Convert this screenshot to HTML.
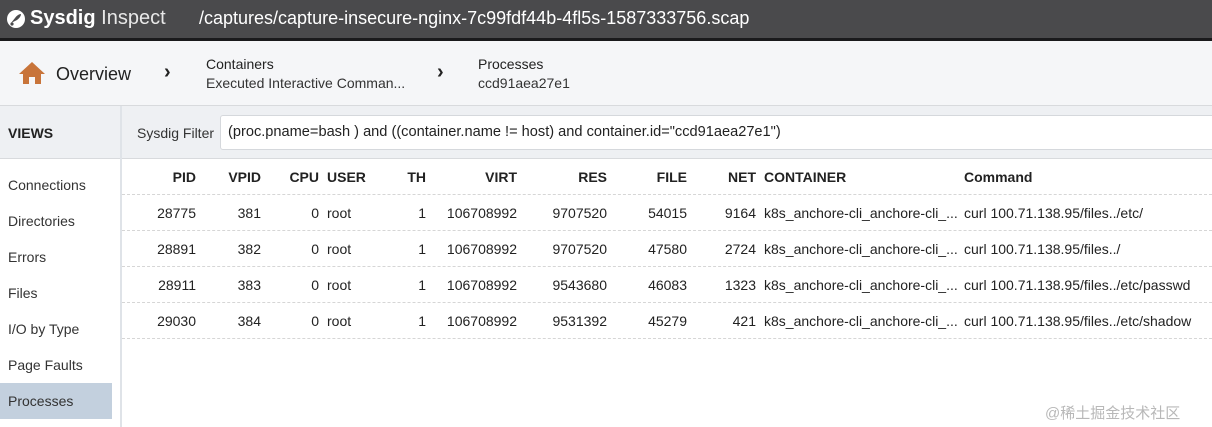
<!DOCTYPE html>
<html><head><meta charset="utf-8"><style>
*{margin:0;padding:0;box-sizing:border-box}
body{width:1212px;height:427px;overflow:hidden;background:#fff;font-family:"Liberation Sans","Noto Sans CJK SC",sans-serif;color:#222;position:relative;font-size:14px}
.a{position:absolute;white-space:nowrap}
.top{position:absolute;left:0;top:0;width:1212px;background:#4a4a4c;border-bottom:3px solid #1a1a1c;height:41px}
.bc{position:absolute;left:0;top:41px;width:1212px;height:65px;background:#f5f6f8;border-bottom:1px solid #d8dadd}
.vh{position:absolute;left:0;top:106px;width:1212px;height:53px;background:#eef0f3;border-bottom:1px solid #d8dadd}
.side{position:absolute;left:120px;top:106px;width:2px;height:321px;background:#dfe3e8}
.filt{position:absolute;left:220px;top:115px;width:1000px;height:35px;background:#fff;border:1px solid #d5d8dc;border-radius:3px}
.r{text-align:right}
.hd{font-weight:bold}
.line{position:absolute;left:122px;width:1090px;border-top:1px dashed #d6d6d6}
.ch{font-size:20px;font-weight:normal;transform:scaleX(0.8)}
</style></head><body>
<div class="top"></div>
<svg class="a" style="left:6px;top:9px" width="20" height="20" viewBox="0 0 20 20"><circle cx="10" cy="10" r="9" fill="#fff"/><path d="M5 14 L9 9 Q12 5 15 5 Q15 8 11 11 Z" fill="#4a4a4c"/><circle cx="6" cy="15" r="1.6" fill="#4a4a4c"/></svg>
<div class="a" style="left:30px;top:7px;font-size:20px;color:#fff;font-weight:bold">Sysdig <span style="font-weight:normal;color:#e8e8e8">Inspect</span></div>
<div class="a" style="left:199px;top:8px;font-size:18px;color:#fff">/captures/capture-insecure-nginx-7c99fdf44b-4fl5s-1587333756.scap</div>
<div class="bc"></div>
<svg class="a" style="left:18px;top:61px" width="28" height="24" viewBox="0 0 28 24"><path d="M14 1 L27 13 L23 13 L23 23 L17 23 L17 16 L11 16 L11 23 L5 23 L5 13 L1 13 Z" fill="#c8743a"/></svg>
<div class="a" style="left:56px;top:64px;font-size:18px;color:#222">Overview</div>
<div class="a" style="left:164px;top:61px;font-size:20px;font-weight:bold">›</div>
<div class="a" style="left:206px;top:56px;font-size:14px">Containers</div>
<div class="a" style="left:206px;top:75px;font-size:14px;color:#333">Executed Interactive Comman...</div>
<div class="a" style="left:437px;top:61px;font-size:20px;font-weight:bold">›</div>
<div class="a" style="left:478px;top:56px;font-size:14px">Processes</div>
<div class="a" style="left:478px;top:75px;font-size:14px;color:#333">ccd91aea27e1</div>
<div class="vh"></div>
<div class="a" style="left:8px;top:125px;font-weight:bold;font-size:14px">VIEWS</div>
<div class="a" style="left:137px;top:125px;color:#333">Sysdig Filter</div>
<div class="filt"></div>
<div class="a" style="left:228px;top:124px;font-size:14.6px">(proc.pname=bash ) and ((container.name != host) and container.id="ccd91aea27e1")</div>
<div class="side"></div>
<div class="a" style="left:8px;top:177px;color:#333">Connections</div>
<div class="a" style="left:8px;top:213px;color:#333">Directories</div>
<div class="a" style="left:8px;top:249px;color:#333">Errors</div>
<div class="a" style="left:8px;top:285px;color:#333">Files</div>
<div class="a" style="left:8px;top:321px;color:#333">I/O by Type</div>
<div class="a" style="left:8px;top:357px;color:#333">Page Faults</div>
<div class="a" style="left:0;top:383px;width:112px;height:36px;background:#c3d0de"></div>
<div class="a" style="left:8px;top:393px;color:#333">Processes</div>

<div class="a hd r" style="left:136px;width:60px;top:169px">PID</div>
<div class="a hd r" style="left:200px;width:61px;top:169px">VPID</div>
<div class="a hd r" style="left:270px;width:49px;top:169px">CPU</div>
<div class="a hd" style="left:327px;top:169px">USER</div>
<div class="a hd r" style="left:380px;width:46px;top:169px">TH</div>
<div class="a hd r" style="left:440px;width:77px;top:169px">VIRT</div>
<div class="a hd r" style="left:530px;width:77px;top:169px">RES</div>
<div class="a hd r" style="left:620px;width:67px;top:169px">FILE</div>
<div class="a hd r" style="left:700px;width:56px;top:169px">NET</div>
<div class="a hd" style="left:764px;top:169px">CONTAINER</div>
<div class="a hd" style="left:964px;top:169px">Command</div>
<div class="line" style="top:194px"></div>

<div class="a r" style="left:136px;width:60px;top:205px">28775</div><div class="a r" style="left:200px;width:61px;top:205px">381</div><div class="a r" style="left:270px;width:49px;top:205px">0</div><div class="a" style="left:327px;top:205px">root</div><div class="a r" style="left:380px;width:46px;top:205px">1</div><div class="a r" style="left:440px;width:77px;top:205px">106708992</div><div class="a r" style="left:530px;width:77px;top:205px">9707520</div><div class="a r" style="left:620px;width:67px;top:205px">54015</div><div class="a r" style="left:700px;width:56px;top:205px">9164</div><div class="a" style="left:764px;top:205px">k8s_anchore-cli_anchore-cli_...</div><div class="a" style="left:964px;top:205px">curl 100.71.138.95/files../etc/</div>
<div class="line" style="top:230px"></div>
<div class="a r" style="left:136px;width:60px;top:241px">28891</div><div class="a r" style="left:200px;width:61px;top:241px">382</div><div class="a r" style="left:270px;width:49px;top:241px">0</div><div class="a" style="left:327px;top:241px">root</div><div class="a r" style="left:380px;width:46px;top:241px">1</div><div class="a r" style="left:440px;width:77px;top:241px">106708992</div><div class="a r" style="left:530px;width:77px;top:241px">9707520</div><div class="a r" style="left:620px;width:67px;top:241px">47580</div><div class="a r" style="left:700px;width:56px;top:241px">2724</div><div class="a" style="left:764px;top:241px">k8s_anchore-cli_anchore-cli_...</div><div class="a" style="left:964px;top:241px">curl 100.71.138.95/files../</div>
<div class="line" style="top:266px"></div>
<div class="a r" style="left:136px;width:60px;top:277px">28911</div><div class="a r" style="left:200px;width:61px;top:277px">383</div><div class="a r" style="left:270px;width:49px;top:277px">0</div><div class="a" style="left:327px;top:277px">root</div><div class="a r" style="left:380px;width:46px;top:277px">1</div><div class="a r" style="left:440px;width:77px;top:277px">106708992</div><div class="a r" style="left:530px;width:77px;top:277px">9543680</div><div class="a r" style="left:620px;width:67px;top:277px">46083</div><div class="a r" style="left:700px;width:56px;top:277px">1323</div><div class="a" style="left:764px;top:277px">k8s_anchore-cli_anchore-cli_...</div><div class="a" style="left:964px;top:277px">curl 100.71.138.95/files../etc/passwd</div>
<div class="line" style="top:302px"></div>
<div class="a r" style="left:136px;width:60px;top:313px">29030</div><div class="a r" style="left:200px;width:61px;top:313px">384</div><div class="a r" style="left:270px;width:49px;top:313px">0</div><div class="a" style="left:327px;top:313px">root</div><div class="a r" style="left:380px;width:46px;top:313px">1</div><div class="a r" style="left:440px;width:77px;top:313px">106708992</div><div class="a r" style="left:530px;width:77px;top:313px">9531392</div><div class="a r" style="left:620px;width:67px;top:313px">45279</div><div class="a r" style="left:700px;width:56px;top:313px">421</div><div class="a" style="left:764px;top:313px">k8s_anchore-cli_anchore-cli_...</div><div class="a" style="left:964px;top:313px">curl 100.71.138.95/files../etc/shadow</div>
<div class="line" style="top:338px"></div>

<div class="a" style="left:1045px;top:402px;font-size:15px;color:#b8b8b8">@稀土掘金技术社区</div>
</body></html>
